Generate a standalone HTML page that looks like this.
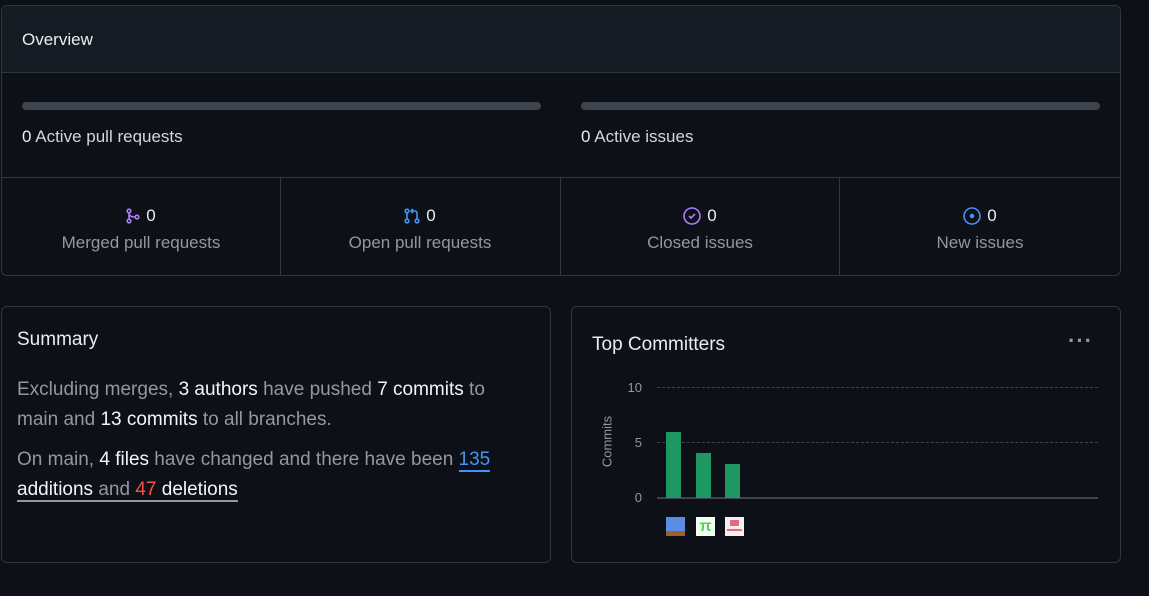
<!DOCTYPE html>
<html><head><meta charset="utf-8"><style>
*{box-sizing:border-box;margin:0;padding:0}
body{width:1149px;height:596px;background:#0d1117;font-family:"Liberation Sans",sans-serif;color:#e6edf3;position:relative;overflow:hidden}
.box{position:absolute;border:1px solid #30363d;border-radius:6px}
.abs{position:absolute}
.bar{position:absolute;height:8px;background:#3d444d;border-radius:4px}
.col{position:absolute;top:177px;height:98px;width:280px;text-align:center}
.col .n{margin-top:29px;font-size:17px;display:flex;justify-content:center;align-items:center;gap:6px}
.col .l{color:#9198a1;font-size:17px;margin-top:7px}
b{font-weight:normal;color:#f0f6fc}
.p{font-size:19px;color:#9198a1;line-height:30px}
</style></head><body>
<div class="box" style="left:1px;top:5px;width:1120px;height:271px;">
 <div style="height:67px;background:#151b23;border-bottom:1px solid #30363d;border-radius:6px 6px 0 0;padding:24px 20px;font-size:17px">Overview</div>
</div>
<div class="bar" style="left:22px;top:102px;width:519px"></div>
<div class="bar" style="left:581px;top:102px;width:519px"></div>
<div class="abs" style="left:22px;top:127px;font-size:17px">0 <span style="color:#d1d7e0">Active pull requests</span></div>
<div class="abs" style="left:581px;top:127px;font-size:17px">0 <span style="color:#d1d7e0">Active issues</span></div>
<div class="abs" style="left:2px;top:177px;width:1118px;border-top:1px solid #30363d"></div>
<div class="abs" style="left:280px;top:177px;height:98px;border-left:1px solid #30363d"></div>
<div class="abs" style="left:560px;top:177px;height:98px;border-left:1px solid #30363d"></div>
<div class="abs" style="left:839px;top:177px;height:98px;border-left:1px solid #30363d"></div>
<div class="col" style="left:1px"><div class="n"><svg width="14" height="16" viewBox="0 0 14 16" fill="none" stroke="#ab7df8" stroke-width="1.6"><circle cx="3" cy="3" r="1.8"/><circle cx="3" cy="13" r="1.8"/><circle cx="11" cy="9" r="1.8"/><path d="M3 5v6M3 5c0 3 3 4 6 4"/></svg>0</div><div class="l">Merged pull requests</div></div>
<div class="col" style="left:280px"><div class="n"><svg width="16" height="16" viewBox="0 0 16 16" fill="none" stroke="#4493f8" stroke-width="1.6"><circle cx="3" cy="3" r="1.8"/><circle cx="3" cy="13" r="1.8"/><circle cx="13" cy="13" r="1.8"/><path d="M3 5v6M13 11V5c0-1-1-2-2-2H8M9 1L7 3l2 2"/></svg>0</div><div class="l">Open pull requests</div></div>
<div class="col" style="left:560px"><div class="n"><svg width="18" height="18" viewBox="0 0 18 18" fill="none" stroke="#ab7df8" stroke-width="1.6"><circle cx="9" cy="9" r="8"/><path d="M6 9l2 2 4-4"/></svg>0</div><div class="l">Closed issues</div></div>
<div class="col" style="left:840px"><div class="n"><svg width="18" height="18" viewBox="0 0 18 18" fill="none" stroke="#4493f8" stroke-width="1.6"><circle cx="9" cy="9" r="8"/><circle cx="9" cy="9" r="1.5" fill="#4493f8"/></svg>0</div><div class="l">New issues</div></div>

<div class="box" style="left:1px;top:306px;width:550px;height:257px;"></div>
<div class="abs" style="left:17px;top:329px;font-size:19px">Summary</div>
<div class="abs p" style="left:17px;top:375px;width:495px">Excluding merges, <b>3 authors</b> have pushed <b>7 commits</b> to main and <b>13 commits</b> to all branches.</div>
<div class="abs p" style="left:17px;top:445px;width:520px">On main, <b>4 files</b> have changed and there have been <span style="color:#4493f8;border-bottom:2px solid #4493f8">135</span><br><span style="border-bottom:2px solid #9198a1"><b>additions</b> and <span style="color:#f85149">47</span> <b>deletions</b></span></div>

<div class="box" style="left:571px;top:306px;width:550px;height:257px;"></div>
<div class="abs" style="left:592px;top:334px;font-size:19px">Top Committers</div>
<div class="abs" style="left:1068px;top:328px;font-size:22px;font-weight:bold;color:#9198a1;letter-spacing:1px">···</div>
<div class="abs" style="left:620px;top:380px;font-size:13px;color:#9198a1;width:22px;text-align:right">10</div>
<div class="abs" style="left:620px;top:435px;font-size:13px;color:#9198a1;width:22px;text-align:right">5</div>
<div class="abs" style="left:620px;top:490px;font-size:13px;color:#9198a1;width:22px;text-align:right">0</div>
<div class="abs" style="left:577px;top:434px;font-size:13px;color:#9198a1;transform:rotate(-90deg);width:60px;text-align:center">Commits</div>
<div class="abs" style="left:657px;top:387px;width:441px;border-top:1px dashed #3d444d"></div>
<div class="abs" style="left:657px;top:442px;width:441px;border-top:1px dashed #3d444d"></div>
<div class="abs" style="left:657px;top:497px;width:441px;border-top:2px solid #3d444d"></div>
<div class="abs" style="left:666px;top:432px;width:15px;height:66px;background:#1f9760"></div>
<div class="abs" style="left:696px;top:453px;width:15px;height:45px;background:#1f9760"></div>
<div class="abs" style="left:725px;top:464px;width:15px;height:34px;background:#1f9760"></div>
<div class="abs" style="left:666px;top:517px;width:19px;height:19px;background:#5b8de6;border-bottom:5px solid #a0602a"></div>
<div class="abs" style="left:696px;top:517px;width:19px;height:19px;background:#f4fff4;color:#5ad05a;font-size:16px;font-weight:bold;text-align:center;line-height:19px">π</div>
<div class="abs" style="left:725px;top:517px;width:19px;height:19px;background:#f6eef0"><div style="margin:3px 5px;width:9px;height:6px;background:#e06b85"></div><div style="margin:2px 2px;width:15px;height:2px;background:#e06b85"></div></div>
</body></html>
